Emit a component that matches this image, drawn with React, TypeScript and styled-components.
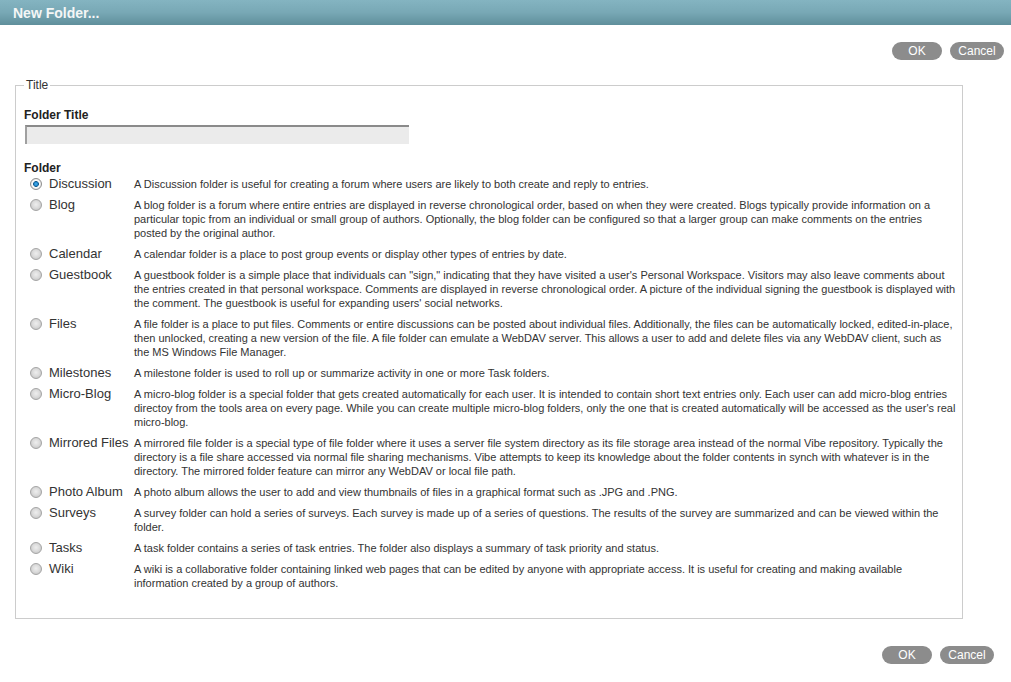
import { FC } from "react";
import styled, { createGlobalStyle } from "styled-components";

interface FolderType {
  id: string;
  label: string;
  description: string;
}

const folderTypes: FolderType[] = [
  {
    id: "discussion",
    label: "Discussion",
    description:
      "A Discussion folder is useful for creating a forum where users are likely to both create and reply to entries.",
  },
  {
    id: "blog",
    label: "Blog",
    description:
      "A blog folder is a forum where entire entries are displayed in reverse chronological order, based on when they were created. Blogs typically provide information on a particular topic from an individual or small group of authors. Optionally, the blog folder can be configured so that a larger group can make comments on the entries posted by the original author.",
  },
  {
    id: "calendar",
    label: "Calendar",
    description:
      "A calendar folder is a place to post group events or display other types of entries by date.",
  },
  {
    id: "guestbook",
    label: "Guestbook",
    description:
      'A guestbook folder is a simple place that individuals can "sign," indicating that they have visited a user\'s Personal Workspace. Visitors may also leave comments about the entries created in that personal workspace. Comments are displayed in reverse chronological order. A picture of the individual signing the guestbook is displayed with the comment. The guestbook is useful for expanding users\' social networks.',
  },
  {
    id: "files",
    label: "Files",
    description:
      "A file folder is a place to put files. Comments or entire discussions can be posted about individual files. Additionally, the files can be automatically locked, edited-in-place, then unlocked, creating a new version of the file. A file folder can emulate a WebDAV server. This allows a user to add and delete files via any WebDAV client, such as the MS Windows File Manager.",
  },
  {
    id: "milestones",
    label: "Milestones",
    description:
      "A milestone folder is used to roll up or summarize activity in one or more Task folders.",
  },
  {
    id: "microblog",
    label: "Micro-Blog",
    description:
      "A micro-blog folder is a special folder that gets created automatically for each user. It is intended to contain short text entries only. Each user can add micro-blog entries directoy from the tools area on every page. While you can create multiple micro-blog folders, only the one that is created automatically will be accessed as the user's real micro-blog.",
  },
  {
    id: "mirrored",
    label: "Mirrored Files",
    description:
      "A mirrored file folder is a special type of file folder where it uses a server file system directory as its file storage area instead of the normal Vibe repository. Typically the directory is a file share accessed via normal file sharing mechanisms. Vibe attempts to keep its knowledge about the folder contents in synch with whatever is in the directory. The mirrored folder feature can mirror any WebDAV or local file path.",
  },
  {
    id: "photo",
    label: "Photo Album",
    description:
      "A photo album allows the user to add and view thumbnails of files in a graphical format such as .JPG and .PNG.",
  },
  {
    id: "surveys",
    label: "Surveys",
    description:
      "A survey folder can hold a series of surveys. Each survey is made up of a series of questions. The results of the survey are summarized and can be viewed within the folder.",
  },
  {
    id: "tasks",
    label: "Tasks",
    description:
      "A task folder contains a series of task entries. The folder also displays a summary of task priority and status.",
  },
  {
    id: "wiki",
    label: "Wiki",
    description:
      "A wiki is a collaborative folder containing linked web pages that can be edited by anyone with appropriate access. It is useful for creating and making available information created by a group of authors.",
  },
];

const GlobalStyle = createGlobalStyle`
  html, body {
    margin: 0;
    padding: 0;
    background: #ffffff;
    font-family: "Liberation Sans", Arial, sans-serif;
    color: #333333;
  }
`;

const Page = styled.div`
  width: 1011px;
  min-height: 682px;
  display: flex;
  flex-direction: column;
`;

const TitleBar = styled.div`
  height: 25px;
  display: flex;
  align-items: center;
  padding-left: 13px;
  background: linear-gradient(to bottom, #84b4c1 0%, #78a8b5 50%, #5f8f9b 100%);
  color: #f4f6f6;
  font-size: 14px;
  font-weight: bold;
`;

const ButtonBar = styled.div<{ $top: number; $right: number }>`
  display: flex;
  justify-content: flex-end;
  gap: 8px;
  padding-top: ${(p) => p.$top}px;
  padding-right: ${(p) => p.$right}px;
`;

const PillButton = styled.button<{ $width: number }>`
  width: ${(p) => p.$width}px;
  height: 18px;
  padding: 0;
  border: none;
  border-radius: 9px;
  background: #8c8c8c;
  color: #ffffff;
  font-family: "Liberation Sans", Arial, sans-serif;
  font-size: 12px;
  line-height: 18px;
  cursor: pointer;
`;

const Box = styled.fieldset`
  margin: 18px 48px 0 15px;
  padding: 16px 4px 28px 8px;
  border: 1px solid #cccccc;
  min-width: 0;
`;

const BoxLegend = styled.legend`
  padding: 0 2px;
  font-size: 12px;
  line-height: 14px;
  color: #333333;
`;

const FieldLabel = styled.div`
  font-size: 12px;
  font-weight: bold;
  line-height: 14px;
  color: #222222;
`;

const TitleInput = styled.input`
  display: block;
  box-sizing: border-box;
  width: 384px;
  height: 19px;
  margin: 3px 0 17px 1px;
  border: none;
  border-top: 2px solid #8a8a8a;
  border-left: 2px solid #a0a0a0;
  background: #ebebeb;
  font-family: "Liberation Sans", Arial, sans-serif;
  font-size: 12px;
  outline: none;
`;

const TypeList = styled.div`
  display: flex;
  flex-direction: column;
  gap: 7px;
  margin-top: 2px;
  padding-left: 6px;
`;

const TypeRow = styled.label`
  display: grid;
  grid-template-columns: 12px 78px 1fr;
  column-gap: 7px;
  align-items: start;
  cursor: pointer;
`;

const Radio = styled.input.attrs({ type: "radio" })`
  appearance: none;
  width: 12px;
  height: 12px;
  margin: 1px 0 0 0;
  border-radius: 50%;
  border: 1px solid #a4a4a4;
  box-sizing: border-box;
  background: radial-gradient(circle at 50% 45%, #eeeeee 0%, #dcdcdc 45%, #bdbdbd 100%);

  &:checked {
    border-color: #8e8e8e;
    background: radial-gradient(
      circle,
      #4fb4f0 0%,
      #1a7fc4 28%,
      #1c5f8e 36%,
      #ffffff 46%,
      #e8e8e8 70%,
      #c8c8c8 100%
    );
  }
`;

const TypeName = styled.span`
  font-size: 13px;
  line-height: 14px;
  color: #333333;
  white-space: nowrap;
`;

const TypeDescription = styled.span`
  font-size: 11px;
  line-height: 14px;
  color: #333333;
`;

const App: FC = () => {
  return (
    <Page>
      <GlobalStyle />
      <TitleBar>New Folder...</TitleBar>
      <ButtonBar $top={17} $right={7}>
        <PillButton $width={50}>OK</PillButton>
        <PillButton $width={54}>Cancel</PillButton>
      </ButtonBar>
      <Box>
        <BoxLegend>Title</BoxLegend>
        <FieldLabel>Folder Title</FieldLabel>
        <TitleInput type="text" />
        <FieldLabel>Folder</FieldLabel>
        <TypeList>
          {folderTypes.map((t) => (
            <TypeRow key={t.id}>
              <Radio name="folderType" value={t.id} defaultChecked={t.id === "discussion"} />
              <TypeName>{t.label}</TypeName>
              <TypeDescription>{t.description}</TypeDescription>
            </TypeRow>
          ))}
        </TypeList>
      </Box>
      <ButtonBar $top={27} $right={17}>
        <PillButton $width={50}>OK</PillButton>
        <PillButton $width={54}>Cancel</PillButton>
      </ButtonBar>
    </Page>
  );
};

export default App;
